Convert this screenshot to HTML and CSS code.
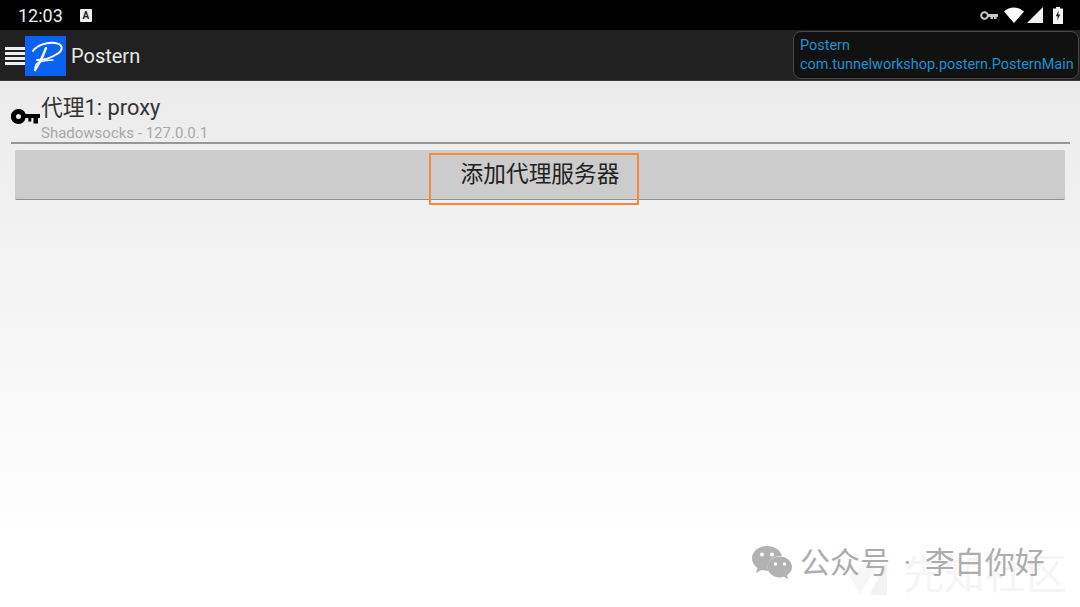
FILE: index.html
```html
<!DOCTYPE html>
<html lang="zh">
<head>
  <meta charset="UTF-8" />
  <meta name="viewport" content="width=device-width, initial-scale=1.0" />
  <title>Postern</title>
  <link rel="stylesheet" href="styles.css">
</head>
<body>
  <div class="status-bar">
    <div class="status-left">
      <span class="clock">12:03</span>
      <span class="notif-a">A</span>
    </div>
    <div class="status-right">
      <svg class="st-key" width="18" height="11" viewBox="0 0 18 11">
        <circle cx="4.500" cy="5.500" r="3.300" fill="none" stroke="#c8c8c8" stroke-width="2"/>
        <path d="M8 4h10v3h-1.500v2h-2.500V7h-1v2h-2.500V7H8z" fill="#c8c8c8"/>
      </svg>
      <svg class="st-wifi" width="20" height="16" viewBox="0 0 20 16">
        <path d="M0 4.500C2.800 1.800 6.200.5 10 .5s7.200 1.300 10 4L10 16z" fill="#fff"/>
      </svg>
      <svg class="st-signal" width="16" height="16" viewBox="0 0 16 16">
        <path d="M16 0v16H0z" fill="#f2f2f2"/>
      </svg>
      <svg class="st-batt" width="10" height="17" viewBox="0 0 10 17">
        <path d="M3 0h4v1.500h3V17H0V1.500h3z" fill="#f4f4f4"/>
        <path d="M5.800 3.500 2.800 9.200h2l-.6 4.300 3-5.900h-2z" fill="#111"/>
      </svg>
    </div>
  </div>

  <div class="action-bar">
    <div class="menu-lines"><i></i><i></i><i></i><i></i></div>
    <div class="app-logo">
      <svg width="41" height="40" viewBox="0 0 41 40">
        <path d="M8 15C12 9 22 6 30 7c8 1 9 7 2 11-6 4-14 6-20 6" fill="none" stroke="#fff" stroke-width="2" stroke-linecap="round"/>
        <path d="M21 12c-3 8-7 16-11 22" fill="none" stroke="#fff" stroke-width="2.400" stroke-linecap="round"/>
        <path d="M10 33c0-4 1-6 4-7 4-1 9-2 14-2" fill="none" stroke="#fff" stroke-width="1.300" stroke-linecap="round"/>
      </svg>
    </div>
    <span class="app-title">Postern</span>
    <div class="activity-tip">
      <div>Postern</div>
      <div>com.tunnelworkshop.postern.PosternMain</div>
    </div>
  </div>

  <div class="content">
    <div class="proxy-row">
      <svg class="key-icon" width="29" height="15" viewBox="0 0 29 15">
        <path d="M7.500 0a7.500 7.500 0 0 1 7.100 5H29v4h-2v5.500h-4.500V9h-2.200v3.500h-3V9h-2.700A7.500 7.500 0 1 1 7.500 0zm0 5a2.500 2.500 0 1 0 0 5 2.500 2.500 0 0 0 0-5z" fill="#000" fill-rule="evenodd"/>
      </svg>
      <div class="proxy-text">
        <div class="proxy-name">代理1: proxy</div>
        <div class="proxy-desc">Shadowsocks - 127.0.0.1</div>
      </div>
    </div>

    <div class="add-btn">
      <span>添加代理服务器</span>
      <div class="highlight"></div>
    </div>
  </div>

  <div class="watermark">
    <svg class="wm-logo" width="39" height="32" viewBox="0 0 39 32">
      <path d="M0 9 12 32 30 0z" fill="#f6f6f6"/>
      <path d="M39 0v32H21z" fill="#f3f3f3"/>
    </svg>
    <span class="wm-site">先知社区</span>
  </div>

  <div class="wechat-mark">
    <svg width="42" height="36" viewBox="0 0 42 36">
      <path d="M16 1C7.500 1 1 6.800 1 13.500c0 3.900 2.100 7.100 5.500 9.500L5 28l5.700-3c1.700.5 3.400.8 5.300.8h1.300a12 12 0 0 1-.6-3.600C16.700 15.500 23 10.500 31 11 29.500 5.200 23.400 1 16 1z" fill="#b2b2b2"/>
      <path d="M41 22c0-6-5.900-10.500-12-10.500-6.600 0-12.500 4.500-12.500 10.500S22.400 32.500 29 32.500c1.400 0 2.700-.3 4-.7l4.200 2.400-1.200-3.900c3-2.200 5-5 5-8.300z" fill="#b2b2b2"/>
      <circle cx="11" cy="9.500" r="2" fill="#fdfdfd"/>
      <circle cx="21" cy="9.500" r="2" fill="#fdfdfd"/>
      <circle cx="24.500" cy="19" r="1.700" fill="#fdfdfd"/>
      <circle cx="33.500" cy="19" r="1.700" fill="#fdfdfd"/>
    </svg>
    <span>公众号 · 李白你好</span>
  </div>
</body>
</html>
```

FILE: styles.css
```css
html, body {
  margin: 0;
  padding: 0;
}

body {
  width: 1080px;
  height: 607px;
  overflow: hidden;
  position: relative;
  display: flex;
  flex-direction: column;
  font-family: Roboto, "Noto Sans CJK SC", sans-serif;
  background: #fff;
}

.status-bar {
  height: 30px;
  background: #000;
  display: flex;
  justify-content: space-between;
  align-items: center;
  padding: 0 17px 0 18px;
}

.status-left {
  display: flex;
  align-items: center;
  gap: 17px;
}

.clock {
  color: #ececec;
  font-size: 18px;
}

.notif-a {
  width: 12px;
  height: 13px;
  background: #eee;
  color: #222;
  border-radius: 1px;
  font-size: 10px;
  font-weight: bold;
  line-height: 13px;
  text-align: center;
}

.status-right {
  display: flex;
  align-items: center;
}

.st-key { margin-right: 6px; }
.st-wifi { margin-right: 3px; }
.st-signal { margin-right: 10px; }

.action-bar {
  height: 51px;
  box-sizing: border-box;
  background: #212121;
  border-bottom: 1px solid #3a3a3a;
  display: flex;
  align-items: center;
  padding: 2px 0 0 5px;
  position: relative;
}

.menu-lines {
  width: 20px;
  display: flex;
  flex-direction: column;
  gap: 2px;
}

.menu-lines i {
  display: block;
  height: 3px;
  background: #eee;
}

.app-logo {
  width: 41px;
  height: 40px;
  background: #0a62f5;
}

.app-title {
  margin-left: 5px;
  color: #e8e8e8;
  font-size: 20px;
}

.activity-tip {
  position: absolute;
  left: 793px;
  top: 1px;
  width: 286px;
  height: 48px;
  box-sizing: border-box;
  background: #111;
  border: 1px solid #484848;
  border-radius: 8px;
  padding: 4px 0 0 6px;
  color: #1b92d1;
  font-size: 14.450px;
  line-height: 19px;
  white-space: nowrap;
}

.content {
  flex: 1;
  background: linear-gradient(#ebebeb, #ffffff 88%);
  padding: 13px 10px 0 11px;
}

.proxy-row {
  display: flex;
  align-items: flex-end;
  border-bottom: 2px solid #969696;
  height: 48px;
}

.key-icon {
  margin-bottom: 18px;
  margin-right: 1px;
}

.proxy-name {
  color: #333;
  font-size: 21.800px;
  line-height: 28px;
}

.proxy-desc {
  color: #a8a8a8;
  font-size: 15px;
  line-height: 18px;
  margin-top: 2px;
}

.add-btn {
  margin: 6px 5px 0 4px;
  height: 49px;
  background: #cccccc;
  border-bottom: 1px solid #8e8e8e;
  border-radius: 2px;
  display: flex;
  align-items: center;
  justify-content: center;
  position: relative;
  color: #222;
  font-size: 22.700px;
}

.add-btn span {
  margin-top: -5px;
}

.highlight {
  position: absolute;
  left: 414px;
  top: 3px;
  width: 210px;
  height: 52px;
  box-sizing: border-box;
  border: 2px solid #f58a3c;
}

.watermark {
  position: absolute;
  left: 848px;
  top: 549px;
  display: flex;
  align-items: center;
  color: #f5f5f5;
}

.wm-logo {
  margin-top: 8px;
}

.wm-site {
  margin-left: 16px;
  font-size: 41px;
  line-height: 52px;
  white-space: nowrap;
}

.wechat-mark {
  position: absolute;
  left: 751px;
  top: 545px;
  display: flex;
  align-items: center;
  gap: 7px;
  color: #adadad;
  font-size: 30px;
  line-height: 36px;
  word-spacing: 6px;
  white-space: nowrap;
}
```
